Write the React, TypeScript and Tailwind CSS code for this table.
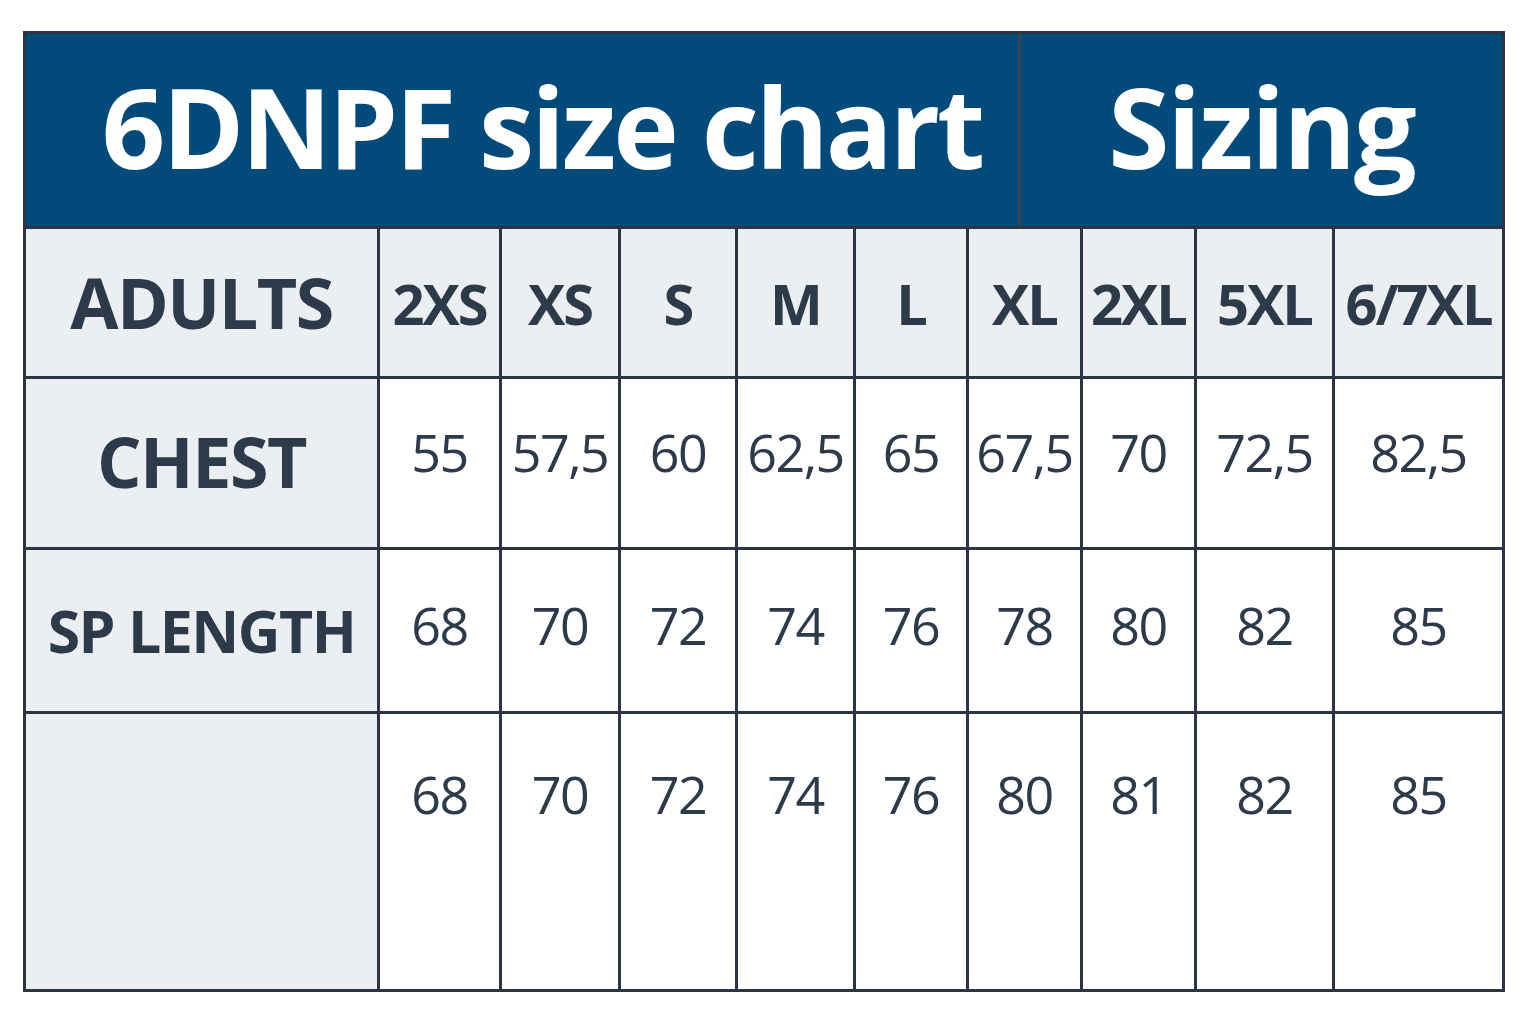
import React from 'react'

const sizes = ['2XS', 'XS', 'S', 'M', 'L', 'XL', '2XL', '5XL', '6/7XL']
const chest = ['55', '57,5', '60', '62,5', '65', '67,5', '70', '72,5', '82,5']
const spLength = ['68', '70', '72', '74', '76', '78', '80', '82', '85']
const extra = ['68', '70', '72', '74', '76', '80', '81', '82', '85']

const font = { fontFamily: '"Open Sans", "Noto Sans", sans-serif' }

function LabelCell({ children, className = '' }: { children?: React.ReactNode; className?: string }) {
  return (
    <div className={`flex items-center justify-center bg-[#eceff1] font-bold text-[#2d3a4a] ${className}`}>
      {children}
    </div>
  )
}

function ValueCell({ children, top = false }: { children: React.ReactNode; top?: boolean }) {
  return (
    <div
      className={`flex justify-center bg-white text-[52px] font-medium tracking-[-1.5px] text-[#2d3a4a] ${
        top ? 'items-start pt-[41px]' : 'items-center'
      }`}
    >
      {children}
    </div>
  )
}

export default function App() {
  return (
    <div className="min-h-screen w-full bg-white pl-[23px] pt-[31px]" style={font}>
      <div className="w-[1482px] bg-[#2b3544] p-[3px]">
        <div className="mb-[3px] grid h-[192px] grid-cols-[992px_1fr] gap-[3px] bg-[#3b4350]">
          <div className="flex items-center justify-center bg-[#024a7a] pb-[8px] pl-[40px] text-[111px] font-bold tracking-[-3px] text-white">
            6DNPF size chart
          </div>
          <div className="flex items-center justify-center bg-[#024a7a] pb-[8px] text-[111px] font-bold tracking-[-2px] text-white">
            Sizing
          </div>
        </div>
        <div className="grid grid-cols-[351px_119px_116px_114px_115px_110px_111px_111px_135px_167px] grid-rows-[147px_168px_161px_275px] gap-[3px]">
          <LabelCell className="text-[70px] tracking-[-1.5px]">ADULTS</LabelCell>
          {sizes.map((s, i) => (
            <LabelCell key={`s${i}`} className="text-[56px] tracking-[-2px]">
              {s}
            </LabelCell>
          ))}
          <LabelCell className="pb-[4px] text-[70px] tracking-[-1.5px]">CHEST</LabelCell>
          {chest.map((v, i) => (
            <ValueCell key={`c${i}`}>
              <span className="pb-[22px]">{v}</span>
            </ValueCell>
          ))}
          <LabelCell className="text-[59px] tracking-[-1.5px]">SP LENGTH</LabelCell>
          {spLength.map((v, i) => (
            <ValueCell key={`p${i}`}>
              <span className="pb-[12px]">{v}</span>
            </ValueCell>
          ))}
          <LabelCell />
          {extra.map((v, i) => (
            <ValueCell key={`e${i}`} top>
              {v}
            </ValueCell>
          ))}
        </div>
      </div>
    </div>
  )
}
